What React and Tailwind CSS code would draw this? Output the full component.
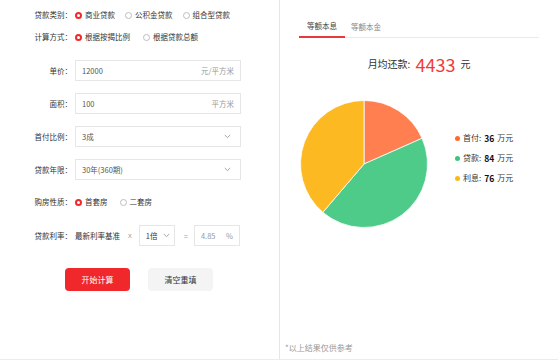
import React from "react";

function Radio({ checked }) {
  return checked ? (
    <span className="inline-block w-[7px] h-[7px] rounded-full border-2 border-[#f2292b] bg-white shrink-0" />
  ) : (
    <span className="inline-block w-[7px] h-[7px] rounded-full border border-[#bdbdbd] bg-white shrink-0" />
  );
}

function RadioItem({ checked, label }) {
  return (
    <div className="flex items-center gap-[3px]">
      <Radio checked={checked} />
      <span className="text-[#333]">{label}</span>
    </div>
  );
}

function Row({ label, children, className }) {
  return (
    <div className={className}>
      <div className="w-[72px] shrink-0 text-right text-[#333]">{label}</div>
      <div className="ml-[3px] flex items-center">{children}</div>
    </div>
  );
}

function Chevron() {
  return (
    <svg width="7" height="5" viewBox="0 0 7 5" className="shrink-0">
      <path d="M0.8 1 L3.5 3.6 L6.2 1" fill="none" stroke="#9a9a9a" strokeWidth="0.9" />
    </svg>
  );
}

function Pie() {
  return (
    <svg width="128" height="128" viewBox="0 0 128 128" className="shrink-0">
      <path d="M64 64 L64 0.5 A63.5 63.5 0 0 1 122.07 38.29 Z" fill="#ff7f50" stroke="#fff" strokeWidth="0.8" />
      <path d="M64 64 L122.07 38.29 A63.5 63.5 0 0 1 22.84 112.35 Z" fill="#4ecb89" stroke="#fff" strokeWidth="0.8" />
      <path d="M64 64 L22.84 112.35 A63.5 63.5 0 0 1 64 0.5 Z" fill="#fdb922" stroke="#fff" strokeWidth="0.8" />
    </svg>
  );
}

function Legend({ color, label, value }) {
  return (
    <div className="flex items-center h-[20px]">
      <span className={`inline-block w-[5px] h-[5px] rounded-full ${color}`} />
      <span className="ml-[3px] text-[#333]">{label}:</span>
      <span className="ml-[3px] font-bold text-[#111] text-[8.5px]">{value}</span>
      <span className="ml-[3px] text-[#333]">万元</span>
    </div>
  );
}

export default function App() {
  return (
    <div className="w-[558px] h-[363px] bg-white font-['Noto_Sans_CJK_SC','Noto_Sans',sans-serif] text-[7.5px] leading-none text-[#333]">
      <div className="flex h-[360px] border-b border-[#ececec]">
        {/* Left panel */}
        <div className="w-[280px] shrink-0 border-r border-[#e6e6e6] pt-[5px]">
          <Row label="贷款类别：" className="flex items-center h-[20px]">
            <div className="flex items-center gap-[10px]">
              <RadioItem checked label="商业贷款" />
              <RadioItem label="公积金贷款" />
              <RadioItem label="组合型贷款" />
            </div>
          </Row>
          <Row label="计算方式：" className="flex items-center h-[20px] mt-[2px]">
            <div className="flex items-center gap-[13px]">
              <RadioItem checked label="根据按揭比例" />
              <RadioItem label="根据贷款总额" />
            </div>
          </Row>
          <Row label="单价：" className="flex items-center h-[21px] mt-[13px]">
            <div className="w-[166px] h-[21px] border border-[#e6e6e6] px-[6px] flex items-center justify-between">
              <span className="text-[#555]">12000</span>
              <span className="text-[#999]">元/平方米</span>
            </div>
          </Row>
          <Row label="面积：" className="flex items-center h-[21px] mt-[12px]">
            <div className="w-[166px] h-[21px] border border-[#e6e6e6] px-[6px] flex items-center justify-between">
              <span className="text-[#555]">100</span>
              <span className="text-[#999]">平方米</span>
            </div>
          </Row>
          <Row label="首付比例：" className="flex items-center h-[21px] mt-[12px]">
            <div className="w-[166px] h-[21px] border border-[#e6e6e6] pl-[6px] pr-[9px] flex items-center justify-between">
              <span className="text-[#555]">3成</span>
              <Chevron />
            </div>
          </Row>
          <Row label="贷款年限：" className="flex items-center h-[21px] mt-[12px]">
            <div className="w-[166px] h-[21px] border border-[#e6e6e6] pl-[6px] pr-[9px] flex items-center justify-between">
              <span className="text-[#555]">30年(360期)</span>
              <Chevron />
            </div>
          </Row>
          <Row label="购房性质：" className="flex items-center h-[20px] mt-[12px]">
            <div className="flex items-center gap-[12px]">
              <RadioItem checked label="首套房" />
              <RadioItem label="二套房" />
            </div>
          </Row>
          <Row label="贷款利率：" className="flex items-center h-[21px] mt-[13px]">
            <span className="text-[#333]">最新利率基准</span>
            <span className="ml-[8px] text-[#9e9e9e] font-['Liberation_Sans',sans-serif]">x</span>
            <div className="ml-[7px] w-[36px] h-[21px] border border-[#e6e6e6] pl-[6px] pr-[4px] flex items-center justify-between">
              <span className="text-[#333]">1倍</span>
              <Chevron />
            </div>
            <span className="ml-[9px] text-[#9e9e9e]">=</span>
            <div className="ml-[6px] w-[46px] h-[21px] border border-[#e6e6e6] px-[6px] flex items-center justify-between">
              <span className="text-[#999]">4.85</span>
              <span className="text-[#999]">%</span>
            </div>
          </Row>
          <div className="flex mt-[22px] ml-[65px]">
            <button className="w-[65px] h-[23px] rounded-[4px] bg-[#f1282b] text-white text-[8px] flex items-center justify-center">
              开始计算
            </button>
            <button className="ml-[18px] w-[65px] h-[23px] rounded-[4px] bg-[#f4f4f4] text-[#333] text-[8px] flex items-center justify-center">
              清空重填
            </button>
          </div>
        </div>

        {/* Right panel */}
        <div className="flex-1 flex flex-col px-[19px]">
          <div className="mt-[16px] flex border-b border-[#eaeaea] h-[22px]">
            <div className="w-[46px] h-[22px] flex items-center justify-center border-b-2 border-[#e8383d] text-[#444] -mb-px">
              等额本息
            </div>
            <div className="ml-[6px] h-[22px] flex items-center text-[#888]">等额本金</div>
          </div>
          <div className="mt-[16px] h-[20px] flex items-center justify-center">
            <span className="text-[10px] text-[#333]">月均还款:</span>
            <span className="ml-[5px] text-[18px] text-[#f23a3a]">4433</span>
            <span className="ml-[5px] text-[10px] text-[#333]">元</span>
          </div>
          <div className="mt-[26px] flex items-start">
            <div className="ml-[1px]">
              <Pie />
            </div>
            <div className="ml-[27px] mt-[28px] flex flex-col text-[8px]">
              <Legend color="bg-[#ff6a2b]" label="首付" value="36" />
              <Legend color="bg-[#3fc47d]" label="贷款" value="84" />
              <Legend color="bg-[#fbb817]" label="利息" value="76" />
            </div>
          </div>
          <div className="mt-auto mb-[7px] -ml-[14px] text-[8px] text-[#999]">*以上结果仅供参考</div>
        </div>
      </div>
    </div>
  );
}
